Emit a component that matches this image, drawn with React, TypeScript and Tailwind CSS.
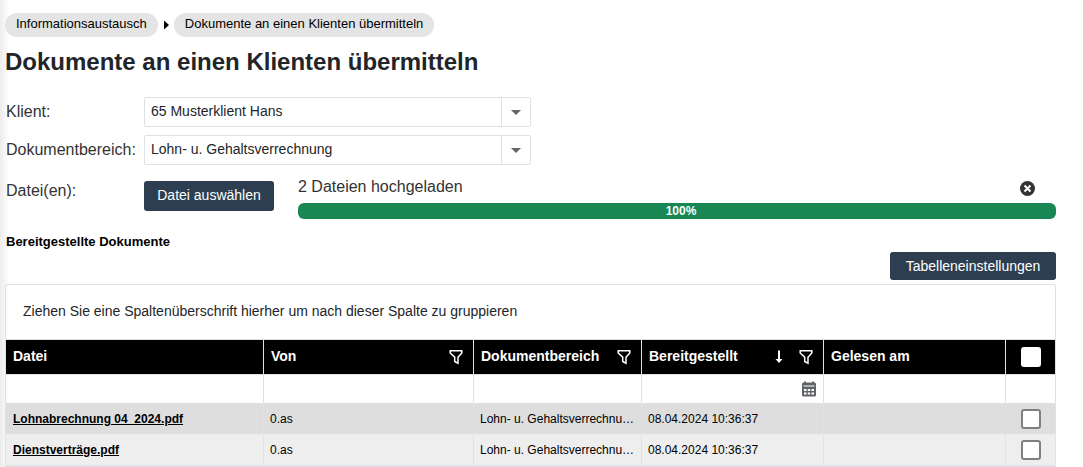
import type { ReactNode } from 'react';

type SelectFieldProps = { id: string; label: string; options: string[] };

function SelectField({ id, label, options }: SelectFieldProps) {
  return (
    <div className="flex items-center">
      <label htmlFor={id} className="w-[138px] shrink-0 pb-px text-base text-[#333]">
        {label}
      </label>
      <div className="relative w-[387px]">
        <select
          id={id}
          className="block h-[30px] w-full appearance-none rounded-xs border border-[#dee2e6] bg-white pr-8 pb-0.5 pl-1.5 text-sm text-[#212529]"
        >
          {options.map((option) => (
            <option key={option}>{option}</option>
          ))}
        </select>
        <span className="pointer-events-none absolute inset-y-px right-px flex w-[29px] items-center justify-center border-l border-[#dee2e6]">
          <svg width="10" height="5" viewBox="0 0 10 5" className="fill-[#656565]">
            <path d="M0 0h10L5 5z" />
          </svg>
        </span>
      </div>
    </div>
  );
}

function FilterIcon() {
  return (
    <svg width="14" height="16" viewBox="0 0 14 16" fill="none" stroke="white" strokeWidth="1.5">
      <path d="M1.2 1.8h11.600v2.200L9 8.200v6L5.700 12.500V8.200L1.200 4z" />
    </svg>
  );
}

function SortDownIcon() {
  return (
    <svg width="8" height="14" viewBox="0 0 8 14" fill="white">
      <path d="M3 0.500h2V9H7.500L4 13 0.500 9H3z" />
    </svg>
  );
}

function CalendarIcon() {
  return (
    <svg width="14" height="16" viewBox="0 0 14 16">
      <path
        fill="#606468"
        d="M2 1.500V0.500h2v1h6v-1h2v1h.5A1.500 1.500 0 0 1 14 3v11a1.500 1.500 0 0 1-1.500 1.500h-11A1.500 1.500 0 0 1 0 14V3a1.500 1.500 0 0 1 1.500-1.500z"
      />
      <path
        fill="white"
        d="M1.500 4.500h11v1h-11zM2 8h2.500v2H2zM5.800 8h2.400v2H5.800zM9.500 8H12v2H9.500zM2 11.500h2.500v2H2zM5.800 11.500h2.400v2H5.800zM9.500 11.500H12v2H9.500z"
      />
    </svg>
  );
}

function HeaderCell({ title, children }: { title: string; children?: ReactNode }) {
  return (
    <th scope="col" className="border-l border-[#dee2e6] px-[7px] text-left text-sm font-bold first:border-l-0">
      <div className="flex items-center">
        <span className="grow truncate pb-0.5">{title}</span>
        <span className="flex items-center gap-4 pr-[3px]">{children}</span>
      </div>
    </th>
  );
}

function RowCheckbox({ label, header = false }: { label: string; header?: boolean }) {
  return (
    <input
      type="checkbox"
      aria-label={label}
      className={
        header
          ? 'mx-auto block size-5 appearance-none rounded-[3px] bg-white'
          : 'mx-auto block size-5 appearance-none rounded-[3px] border-2 border-[#808080] bg-white'
      }
    />
  );
}

const documents = [
  { file: 'Lohnabrechnung 04_2024.pdf', from: '0.as', area: 'Lohn- u. Gehaltsverrechnung', date: '08.04.2024 10:36:37' },
  { file: 'Dienstverträge.pdf', from: '0.as', area: 'Lohn- u. Gehaltsverrechnung', date: '08.04.2024 10:36:37' },
];

export default function App() {
  return (
    <main className="min-h-screen bg-[linear-gradient(to_right,#ececec,#ffffff_9px)] pt-[13px] pr-[27px] pl-[5px] font-['Liberation_Sans',Arial,sans-serif] text-[#212529]">
      <nav aria-label="Breadcrumb" className="flex items-center text-[13px] text-black">
        <a href="#informationsaustausch" className="flex h-6 items-center rounded-full bg-[#e4e4e4] px-[11px] pb-0.5">
          Informationsaustausch
        </a>
        <svg width="16" height="10" viewBox="0 0 16 10" className="fill-black">
          <path d="M6 0.500L11 5 6 9.500z" />
        </svg>
        <a href="#dokumente" className="flex h-6 items-center rounded-full bg-[#e4e4e4] px-[11px] pb-0.5">
          Dokumente an einen Klienten übermitteln
        </a>
      </nav>

      <h1 className="mt-[9px] text-2xl font-bold">Dokumente an einen Klienten übermitteln</h1>

      <form className="mt-[19px] flex flex-col gap-2 pl-px">
        <SelectField id="klient" label="Klient:" options={['65 Musterklient Hans']} />
        <SelectField id="bereich" label="Dokumentbereich:" options={['Lohn- u. Gehaltsverrechnung']} />
        <div className="flex items-start">
          <span className="w-[138px] shrink-0 pt-1.5 text-base leading-6 text-[#333]">Datei(en):</span>
          <div className="pt-2">
            <button type="button" className="h-[30px] w-[130px] rounded-[3px] bg-[#2c3e50] pb-0.5 text-sm text-white">
              Datei auswählen
            </button>
          </div>
          <div className="ml-6 grow">
            <div className="flex h-[30px] items-center justify-between pr-[21px]">
              <span className="pb-0.5 text-base text-[#333]">2 Dateien hochgeladen</span>
              <button type="button" aria-label="Entfernen">
                <svg width="15" height="15" viewBox="0 0 15 15">
                  <circle cx="7.500" cy="7.500" r="7.500" fill="#333" />
                  <path d="M4.500 4.500l6 6M10.500 4.500l-6 6" stroke="white" strokeWidth="2" />
                </svg>
              </button>
            </div>
            <div
              role="progressbar"
              aria-label="Upload"
              aria-valuenow={100}
              className="flex h-4 items-center justify-center rounded-md bg-[#198754] pl-2 text-xs font-bold text-white"
            >
              100%
            </div>
          </div>
        </div>
      </form>

      <h2 className="mt-[13px] pl-px text-[13px] leading-5 font-bold text-black">Bereitgestellte Dokumente</h2>

      <div className="flex justify-end">
        <button type="button" className="h-7 w-[166px] rounded-[3px] bg-[#2c3e50] text-sm text-white">
          Tabelleneinstellungen
        </button>
      </div>

      <section className="mt-1 rounded-t-[3px] border border-b-2 border-[#dee2e6]">
        <p className="flex h-[55px] items-center border-b border-[#dee2e6] px-[17px] pb-0.5 text-sm">
          Ziehen Sie eine Spaltenüberschrift hierher um nach dieser Spalte zu gruppieren
        </p>
        <table className="w-full table-fixed border-separate border-spacing-0 text-xs text-black">
          <colgroup>
            <col />
            <col className="w-[210px]" />
            <col className="w-[168px]" />
            <col className="w-[182px]" />
            <col className="w-[182px]" />
            <col className="w-[50px]" />
          </colgroup>
          <thead>
            <tr className="h-[34px] bg-black text-white">
              <HeaderCell title="Datei" />
              <HeaderCell title="Von">
                <FilterIcon />
              </HeaderCell>
              <HeaderCell title="Dokumentbereich">
                <FilterIcon />
              </HeaderCell>
              <HeaderCell title="Bereitgestellt">
                <SortDownIcon />
                <FilterIcon />
              </HeaderCell>
              <HeaderCell title="Gelesen am" />
              <th scope="col" className="border-l border-[#dee2e6]">
                <RowCheckbox label="Alle auswählen" header />
              </th>
            </tr>
            <tr className="h-[29px]">
              <td className="border-t border-[#dee2e6]" />
              <td className="border-t border-l border-[#dee2e6]" />
              <td className="border-t border-l border-[#dee2e6]" />
              <td className="border-t border-l border-[#dee2e6] pr-[7px]">
                <button type="button" aria-label="Datum wählen" className="ml-auto block">
                  <CalendarIcon />
                </button>
              </td>
              <td className="border-t border-l border-[#dee2e6]" />
              <td className="border-t border-l border-[#dee2e6]" />
            </tr>
          </thead>
          <tbody>
            {documents.map((doc) => (
              <tr key={doc.file} className="h-[31px] odd:bg-[#dedede] even:bg-[#eeeeee]">
                <td className="truncate px-[7px]">
                  <a href="#datei" className="font-bold underline">
                    {doc.file}
                  </a>
                </td>
                <td className="truncate border-l border-[#dee2e6] px-1.5">{doc.from}</td>
                <td className="truncate border-l border-[#dee2e6] px-1.5">{doc.area}</td>
                <td className="truncate border-l border-[#dee2e6] px-1.5">{doc.date}</td>
                <td className="border-l border-[#dee2e6]" />
                <td className="border-l border-[#dee2e6]">
                  <RowCheckbox label={`${doc.file} auswählen`} />
                </td>
              </tr>
            ))}
          </tbody>
        </table>
      </section>
    </main>
  );
}
